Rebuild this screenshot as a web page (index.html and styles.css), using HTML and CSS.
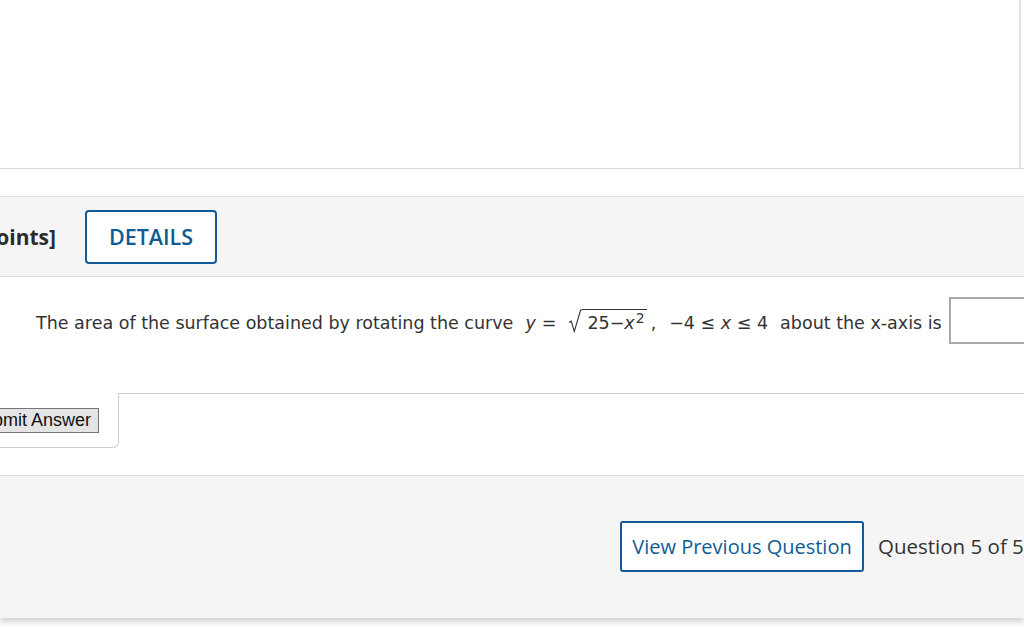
FILE: index.html
```html
<!DOCTYPE html>
<html>
<head>
<meta charset="utf-8">
<link rel="stylesheet" href="styles.css">
</head>
<body>
<div class="page">
  <div class="top-panel">
    <div class="top-inner"></div>
  </div>
  <div class="spacer"></div>
  <section class="question">
    <div class="q-header">
      <div class="points"><span>[-/1 Points]</span></div>
      <button class="details-btn">DETAILS</button>
    </div>
    <div class="q-body">
      <div class="q-text">
        <span class="txt">The area of the surface obtained by rotating the curve</span>
        <span class="math txt">
          <i class="mi">y</i><span class="eq">=</span>
          <span class="sqrt"><svg class="rad" width="14" height="24" viewBox="0 0 14 24"><path d="M1 13.5 L3.2 12.2 L6.3 22.5 L12.6 1 L14 1" fill="none" stroke="#333" stroke-width="1.1"/></svg><span class="radicand">25&minus;<i class="mi">x</i><sup>2</sup></span></span><span class="comma">,</span>
          <span class="range">&minus;4 &le; <i class="mi">x</i> &le; 4</span>
        </span>
        <span class="txt">about the x-axis is</span>
        <span class="answer-box"></span>
      </div>
      <div class="submit-row">
        <div class="submit-cell"><button class="submit-btn">Submit Answer</button></div>
        <div class="submit-rest"></div>
      </div>
    </div>
  </section>
  <footer class="q-footer">
    <button class="nav-btn">View Previous Question</button>
    <span class="q-count">Question 5 of 5</span>
  </footer>
</div>
</body>
</html>
```
FILE: styles.css
```css
* { box-sizing: border-box; }
html, body { margin: 0; padding: 0; background: #fff; }
body { width: 1024px; height: 640px; overflow: hidden; }
.page { width: 1024px; }

.top-panel {
  height: 169px;
  border-bottom: 1px solid #dddddd;
}
.top-inner {
  width: 1021px;
  height: 168px;
  border-right: 2px solid #e4e4e4;
}
.spacer { height: 27px; }

.question {
  border-top: 1px solid #dcdcdc;
}
.q-header {
  display: flex;
  align-items: center;
  height: 80px;
  background: #f5f5f5;
  border-bottom: 1px solid #dcdcdc;
}
.points {
  width: 56px;
  display: flex;
  justify-content: flex-end;
  white-space: nowrap;
  font-family: "Open Sans", sans-serif;
  font-weight: 700;
  font-size: 21px;
  color: #2b2b2b;
}
.details-btn {
  margin-left: 29px;
  width: 132px;
  height: 54px;
  border: 2px solid #13599a;
  border-radius: 4px;
  background: #fff;
  color: #0f5b94;
  font-family: "Open Sans", sans-serif;
  font-weight: 600;
  font-size: 21.5px;
  padding: 0;
}

.q-body { background: #fff; }
.q-text {
  display: flex;
  align-items: center;
  height: 116px;
  padding-left: 36px;
  padding-top: 20px;
  padding-bottom: 49px;
  font-family: "DejaVu Sans", Verdana, sans-serif;
  font-size: 17.5px;
  color: #333;
  white-space: nowrap;
}
.txt { padding-top: 4px; }
.math {
  display: inline-flex;
  align-items: center;
  margin-left: 12px;
  margin-right: 12px;
  font-family: "DejaVu Sans", Verdana, sans-serif;
  font-size: 17.5px;
}
.mi { font-style: italic; }
.eq { margin-left: 6px; margin-right: 12px; }
.sqrt { display: inline-flex; align-items: flex-start; position: relative; top: -1px; }
.rad { display: block; }
.radicand {
  border-top: 1px solid #333;
  padding: 2px 2px 0 5px;
  line-height: 22px;
}
.radicand sup { font-size: 14px; vertical-align: 6px; line-height: 0; margin-left: 1px; }
.comma { margin-left: 4px; margin-right: 13px; }
.answer-box {
  display: inline-block;
  width: 90px;
  height: 47px;
  margin-left: 7px;
  border: 2px solid #a9a9a9;
  background: #fff;
  flex: none;
}

.submit-row {
  display: flex;
  align-items: flex-start;
  height: 82px;
}
.submit-cell {
  width: 119px;
  height: 55px;
  display: flex;
  justify-content: flex-end;
  align-items: center;
  padding-right: 19px;
  border-right: 1px solid #cfcfcf;
  border-bottom: 1px solid #cfcfcf;
  border-bottom-right-radius: 6px;
  white-space: nowrap;
}
.submit-btn {
  height: 25px;
  padding: 0 7px;
  border: 1px solid #767676;
  background: #e4e4e4;
  border-radius: 0;
  font-family: "Liberation Sans", Arial, sans-serif;
  font-size: 18px;
  color: #111;
  flex: none;
}
.submit-rest {
  flex: 1;
  border-top: 1px solid #cfcfcf;
  margin-left: -1px;
}

.q-footer {
  display: flex;
  align-items: flex-start;
  height: 143px;
  padding-left: 620px;
  padding-top: 45px;
  background: #f5f5f5;
  border-top: 1px solid #dcdcdc;
  box-shadow: 0 4px 6px rgba(0,0,0,0.18);
  white-space: nowrap;
}
.nav-btn {
  width: 244px;
  height: 51px;
  border: 2px solid #13599a;
  border-radius: 3px;
  background: #fff;
  color: #0f5b94;
  font-family: "Open Sans", sans-serif;
  font-size: 20px;
  padding: 0;
  flex: none;
}
.q-count {
  margin-left: 14px;
  line-height: 51px;
  font-family: "Open Sans", sans-serif;
  font-size: 20.5px;
  color: #333;
}
```
